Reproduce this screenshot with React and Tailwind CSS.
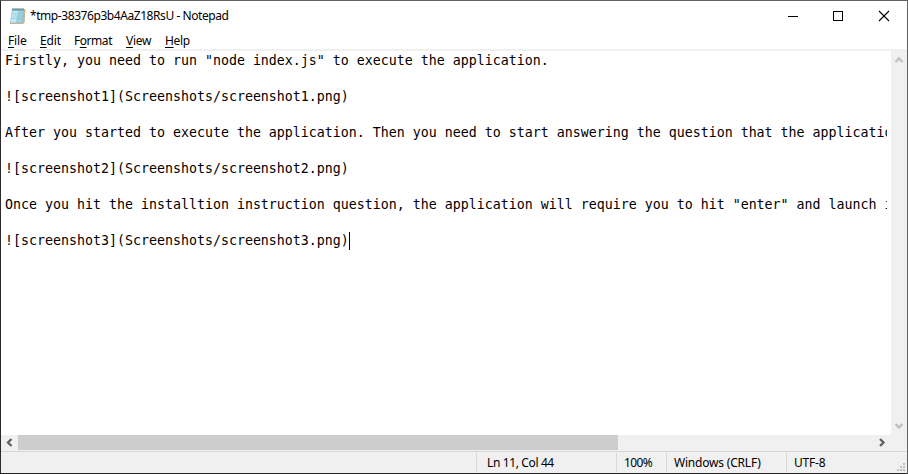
import React from "react";

const UI = "font-['Noto_Sans','Open_Sans',sans-serif]";

const LINES = [
  'Firstly, you need to run "node index.js" to execute the application.',
  "",
  "![screenshot1](Screenshots/screenshot1.png)",
  "",
  "After you started to execute the application. Then you need to start answering the question that the application",
  "",
  "![screenshot2](Screenshots/screenshot2.png)",
  "",
  'Once you hit the installtion instruction question, the application will require you to hit "enter" and launch it',
  "",
  "![screenshot3](Screenshots/screenshot3.png)",
];

function NotepadIcon() {
  return (
    <svg width="18" height="18" viewBox="0 0 18 18" className="shrink-0">
      <path d="M4 2h12.500l-.8 13.500-1.700 1.500H1z" fill="#c9b48f" />
      <path d="M3 2h12l-1.500 14H1z" fill="#86c6d8" />
      <path d="M3.500 4h6L7 15.500H1.500z" fill="#c3e8f0" />
      <path d="M9.500 4H14l-1 11.500H8z" fill="#9bd3e1" />
      <path d="M3.500 6.500h10.500M3 9h10.500M2.500 11.500h10.500" stroke="#7dbccd" strokeWidth=".5" />
      <path d="M4 1v2.500M6 1v2.500M8 1v2.500M10 1v2.500M12 1v2.500M14 1v2.500" stroke="#566870" strokeWidth=".9" />
    </svg>
  );
}

function TitleBar() {
  return (
    <div className="flex h-[30px] shrink-0 items-center pl-2">
      <NotepadIcon />
      <div className="ml-[3px] grow whitespace-pre text-[12px] leading-4 tracking-[-0.43px]">*tmp-38376p3b4AaZ18RsU - Notepad</div>
      <svg width="46" height="28" viewBox="0 0 46 28" shapeRendering="crispEdges"><path d="M18 14h10v1H18z" /></svg>
      <svg width="46" height="28" viewBox="0 0 46 28" shapeRendering="crispEdges"><path d="M17.500 9.500h9v9h-9z" fill="none" stroke="#000" /></svg>
      <svg width="45" height="28" viewBox="0 0 45 28"><path d="M17 9l10 10M27 9L17 19" fill="none" stroke="#000" strokeWidth="1.1" /></svg>
    </div>
  );
}

function MenuItem({ before = "", hot, after, className }) {
  return (
    <div className={className}>
      {before}
      <span className="underline decoration-1 underline-offset-2">{hot}</span>
      {after}
    </div>
  );
}

function MenuBar() {
  return (
    <div className="flex h-[18px] shrink-0 items-end pl-[7px] text-[12px] leading-4 tracking-[-0.15px]">
      <MenuItem hot="F" after="ile" className="w-8" />
      <MenuItem hot="E" after="dit" className="w-[34px]" />
      <MenuItem before="F" hot="o" after="rmat" className="w-[52px] tracking-[-0.45px]" />
      <MenuItem hot="V" after="iew" className="w-[39px] tracking-[-0.3px]" />
      <MenuItem hot="H" after="elp" className="tracking-[-0.3px]" />
    </div>
  );
}

function Chevron({ d, color }) {
  return (
    <svg width="16" height="16" viewBox="0 0 16 16" className="shrink-0">
      <path d={d} fill="none" stroke={color} strokeWidth="2.3" />
    </svg>
  );
}

function StatusBar() {
  return (
    <div className="flex h-[22px] shrink-0 border-t border-[#d7d7d7] bg-[#f0f0f0] pt-px text-[12px] leading-[19px]">
      <div className="w-[475px] shrink-0" />
      <div className="h-[19px] w-[140px] shrink-0 border-l border-[#d7d7d7] pl-[10px] tracking-[-0.37px]">Ln 11, Col 44</div>
      <div className="h-[19px] w-[50px] shrink-0 border-l border-[#d7d7d7] pl-[7px] tracking-[-0.6px]">100%</div>
      <div className="h-[19px] w-[120px] shrink-0 border-l border-[#d7d7d7] pl-[7px] tracking-[-0.2px]">Windows (CRLF)</div>
      <div className="h-[19px] grow border-l border-[#d7d7d7] pl-[7px] tracking-[-0.2px]">UTF-8</div>
      <svg width="10" height="10" viewBox="0 0 10 10" className="mb-px self-end" fill="#bfbfbf" shapeRendering="crispEdges">
        <path d="M6 1h2v2H6zM3 4h2v2H3zM6 4h2v2H6zM0 7h2v2H0zM3 7h2v2H3zM6 7h2v2H6z" />
      </svg>
    </div>
  );
}

export default function App() {
  return (
    <div className={`flex h-[474px] w-[908px] flex-col overflow-hidden border border-t-[#626262] border-r-[#626262] border-b-[#242424] border-l-[#2d292c] bg-white text-black ${UI}`}>
      <TitleBar />
      <MenuBar />
      <div className="h-[2px] shrink-0 bg-[#f0f0f0]" />
      <div className="flex h-[384px] shrink-0">
        <div className="mr-1 w-[886px] shrink-0 overflow-hidden pl-1 pt-px font-['DejaVu_Sans_Mono',monospace] text-[13.29px] leading-[18px]">
          {LINES.map((line, i) => (
            <div key={i} className="flex h-[18px] whitespace-pre">
              {line}
              {i === LINES.length - 1 && <span className="h-[18px] w-px shrink-0 bg-black" />}
            </div>
          ))}
        </div>
        <div className="flex w-4 shrink-0 flex-col justify-between bg-[#f0f0f0]">
          <Chevron d="M4.500 11L8 7.500l3.500 3.500" color="#bfbfbf" />
          <Chevron d="M4.500 5L8 8.500l3.500-3.500" color="#bfbfbf" />
        </div>
      </div>
      <div className="flex h-4 shrink-0 bg-[#f0f0f0]">
        <Chevron d="M10.500 4L7 7.500l3.500 3.500" color="#606060" />
        <div className="ml-px h-[15px] w-[600px] bg-[#cdcdcd]" />
        <div className="grow" />
        <div className="mr-[17px] h-4"><Chevron d="M6 4l3.500 3.500L6 11" color="#606060" /></div>
      </div>
      <StatusBar />
    </div>
  );
}
